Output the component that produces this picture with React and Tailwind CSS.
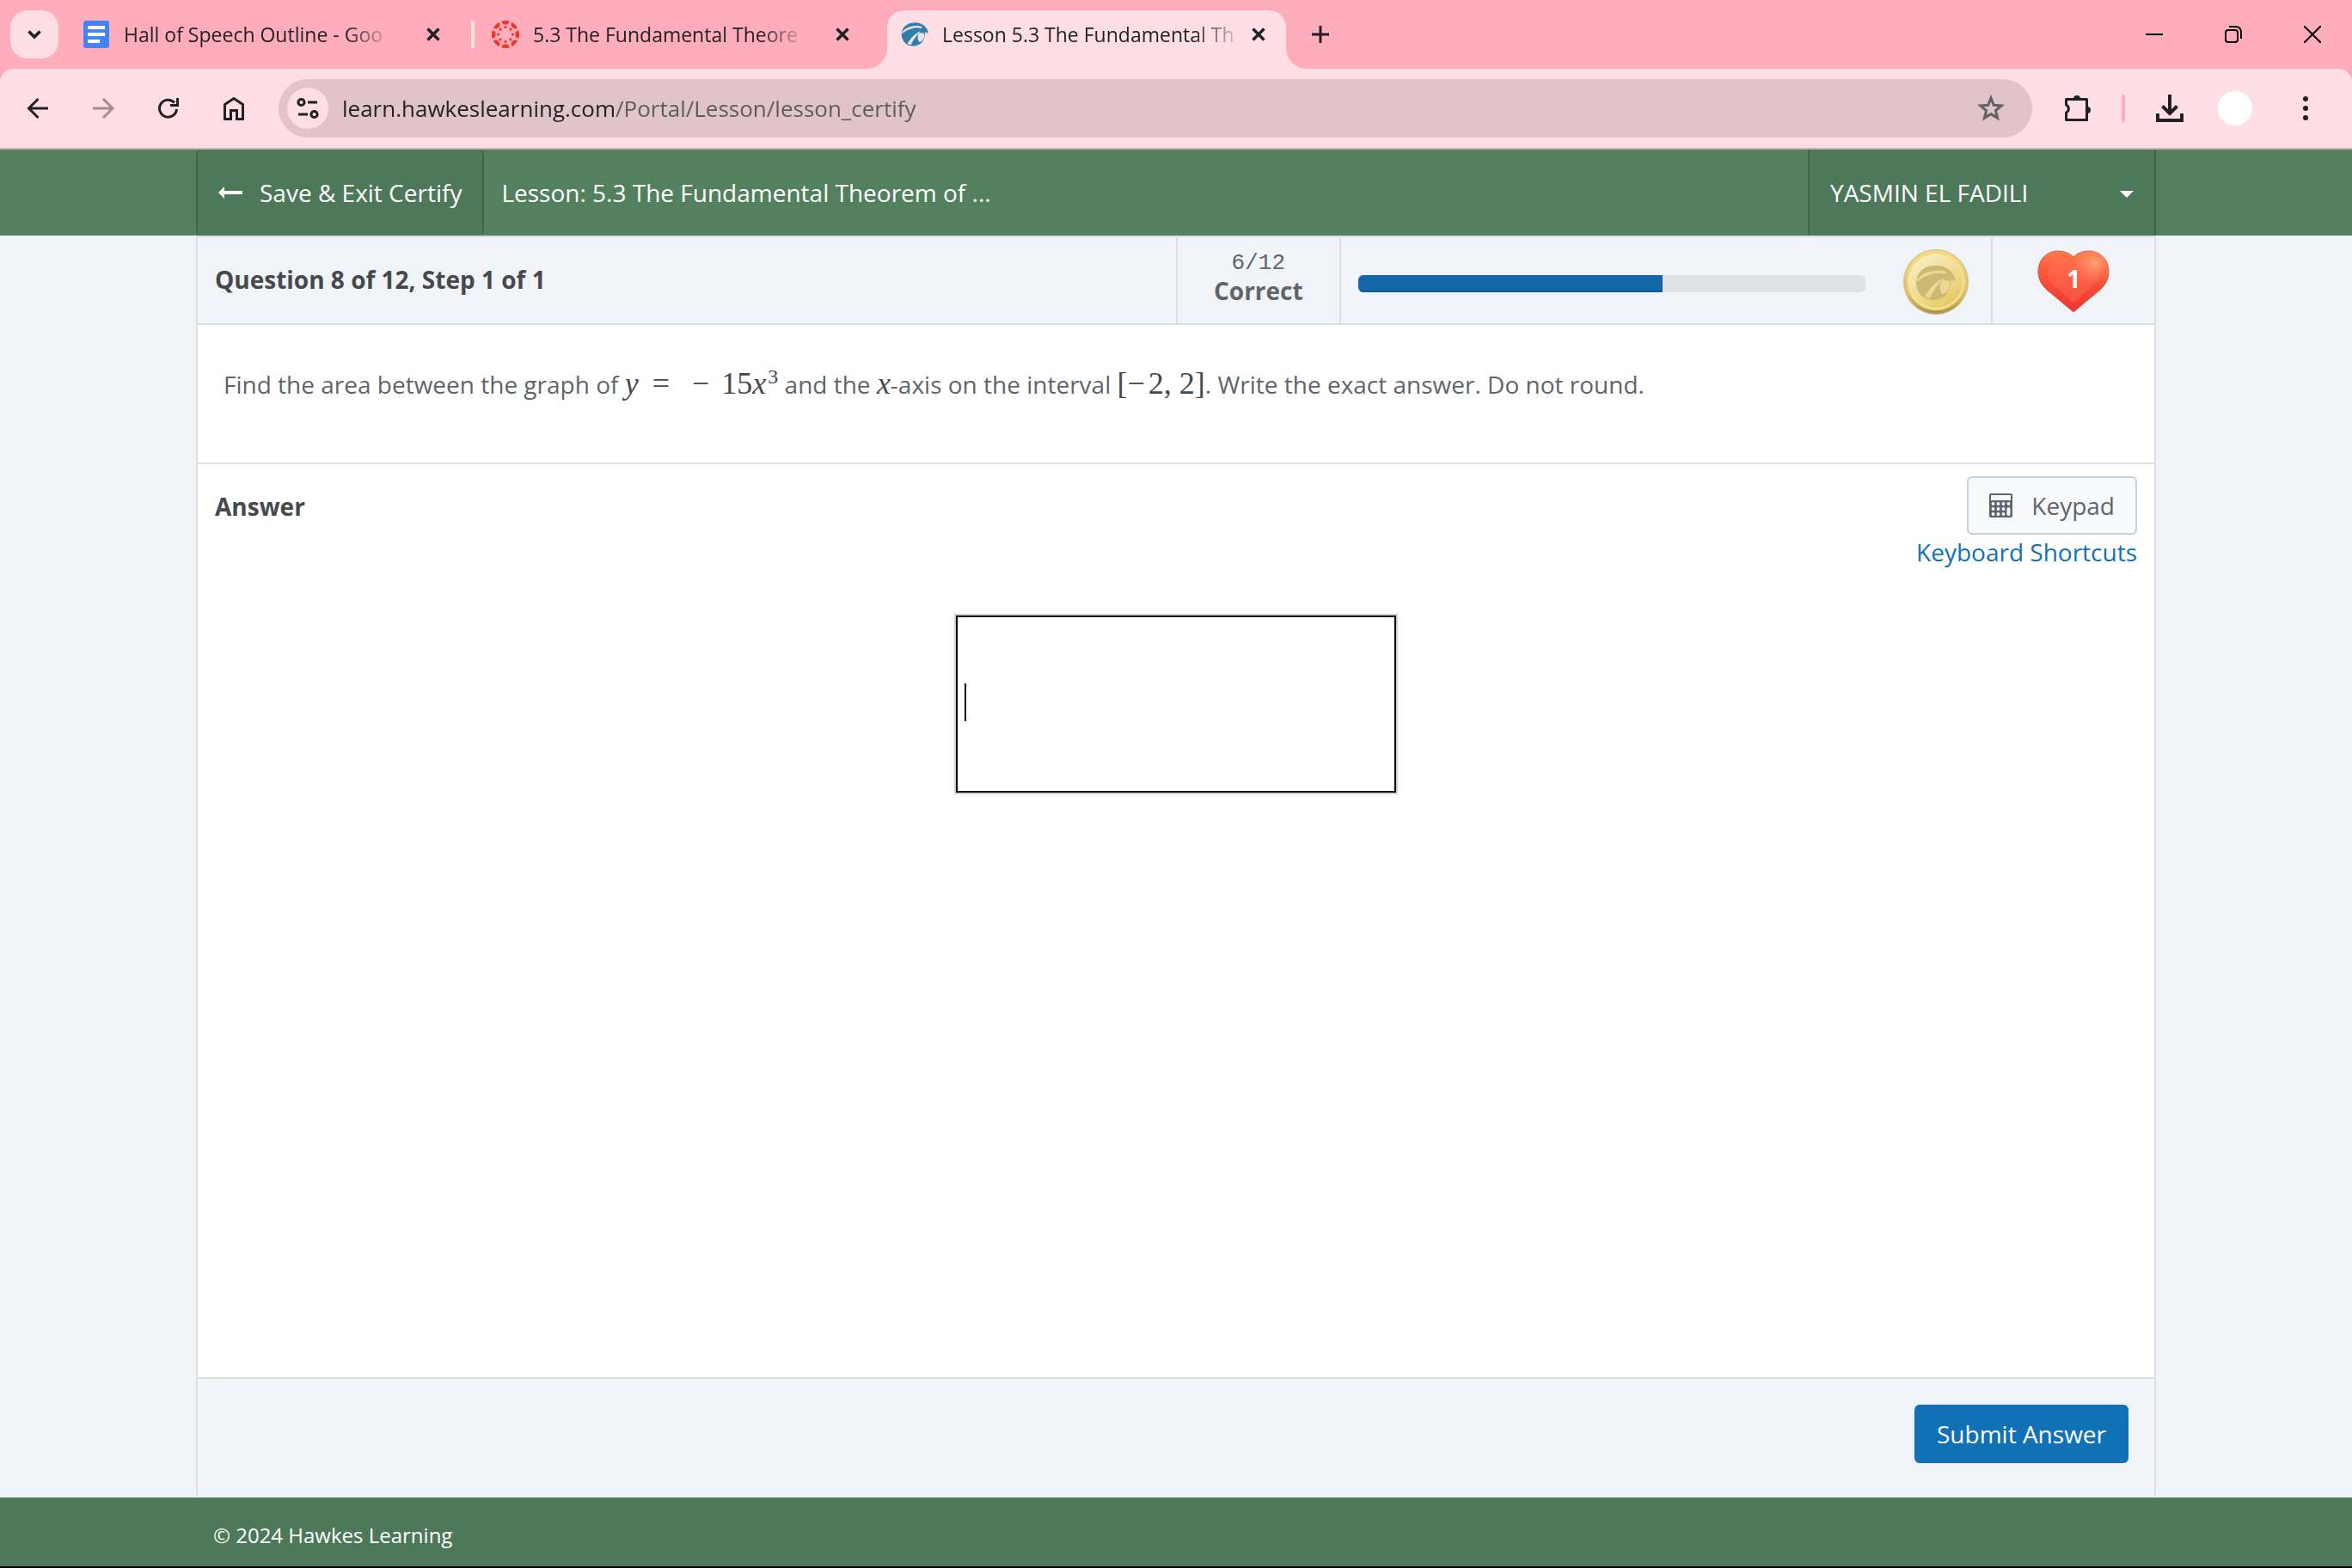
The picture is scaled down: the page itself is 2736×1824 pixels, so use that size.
import { useState } from 'react'

const TABS = [
  { id: 'docs', title: 'Hall of Speech Outline - Goo', icon: 'docs' },
  { id: 'canvas', title: '5.3 The Fundamental Theore', icon: 'canvas' },
  { id: 'lesson', title: 'Lesson 5.3 The Fundamental Th', icon: 'eagle' },
]

const Icon = ({ size = 32, className = '', children }) => (
  <svg
    width={size}
    height={size}
    viewBox={`0 0 ${size} ${size}`}
    fill="none"
    stroke="currentColor"
    strokeWidth="3"
    aria-hidden="true"
    className={`shrink-0 ${className}`}
  >
    {children}
  </svg>
)

const EagleShape = ({ body, light }) => (
  <>
    <path
      fill={body}
      stroke="none"
      d="M1 20C2 8 11 1 22 1C32 0 40 5 43 10C46 13 47 17 46 20C45 18 43 17 41 17C42 28 36 41 21 41C9 41 1 32 1 20Z"
    />
    <path
      fill={light}
      stroke="none"
      d="M2 17C10 8 22 5 33 7C36 8 37 10 35 11C27 8 14 10 2 20ZM11 37C16 28 24 19 34 15C28 21 21 30 17 39ZM31 18C36 19 40 17 40 22C40 30 35 34 31 34C28 30 28 24 31 18Z"
    />
  </>
)

const Favicon = ({ name }) => {
  if (name === 'docs') {
    return (
      <Icon>
        <rect x="1" width="30" height="32" rx="3" fill="#4285f4" stroke="none" />
        <path d="M6 8h20M6 16h20M6 24h14" stroke="#fff" strokeWidth="4" />
      </Icon>
    )
  }
  if (name === 'canvas') {
    const angles = [0, 45, 90, 135, 180, 225, 270, 315]
    return (
      <Icon>
        <clipPath id="rim">
          <circle cx="16" cy="16" r="16" />
        </clipPath>
        <g clipPath="url(#rim)" fill="#e63a2c" stroke="none">
          {angles.map(angle => (
            <g key={angle} transform={`rotate(${angle} 16 16)`}>
              <circle cx="16" cy="0" r="4.8" />
              <circle cx="16" cy="7.6" r="1.6" />
            </g>
          ))}
        </g>
      </Icon>
    )
  }
  return (
    <svg width="32" height="30" viewBox="0 0 47 42" aria-hidden="true" className="shrink-0">
      <EagleShape body="#2f7fa6" light="#e9e4ea" />
    </svg>
  )
}

const CloseIcon = () => (
  <Icon size={16}>
    <path d="M1.5 1.5l13 13M14.5 1.5l-13 13" strokeWidth="3.4" />
  </Icon>
)

const Tab = ({ tab, active }) => (
  <div
    className={`relative flex h-full items-center pl-4 ${
      active ? 'w-[464px] rounded-t-[20px] bg-[#ffdfe5] pr-6' : 'w-[448px] pr-4'
    }`}
  >
    {active && (
      <>
        <svg width="24" height="24" className="absolute bottom-0 -left-6" aria-hidden="true">
          <path d="M24 0V24H0A24 24 0 0 0 24 0Z" fill="#ffdfe5" />
        </svg>
        <svg width="24" height="24" className="absolute -right-6 bottom-0" aria-hidden="true">
          <path d="M0 0V24H24A24 24 0 0 1 0 0Z" fill="#ffdfe5" />
        </svg>
      </>
    )}
    <div className="flex h-14 min-w-0 flex-1 items-center self-start">
      <Favicon name={tab.icon} />
      <span className="mr-auto ml-4 text-[23px] whitespace-nowrap [mask-image:linear-gradient(to_right,#000_86%,#0003)]">
        {tab.title}
      </span>
      <button type="button" aria-label={`Close ${tab.title}`}>
        <CloseIcon />
      </button>
    </div>
  </div>
)

const TabStrip = () => (
  <div className="flex h-20 items-end bg-[#ffadbb] pl-3 text-[#1f2124]">
    <button
      type="button"
      aria-label="Search tabs"
      className="mb-3 flex size-14 items-center justify-center rounded-[20px] bg-[#ffdfe5]"
    >
      <Icon size={16}>
        <path d="M1.5 4.5L8 11l6.500-6.500" strokeWidth="3.600" />
      </Icon>
    </button>
    <div className="ml-3 flex h-[68px] flex-1 items-start">
      <Tab tab={TABS[0]} />
      <span className="mt-3 ml-5 h-8 w-1 rounded-full bg-[#ffdfe5]" />
      <div className="ml-1 h-full">
        <Tab tab={TABS[1]} />
      </div>
      <div className="ml-7 h-full">
        <Tab tab={TABS[2]} active />
      </div>
      <button type="button" aria-label="New tab" className="mt-[18px] ml-[30px]">
        <Icon size={20}>
          <path d="M10 0v20M0 10h20" />
        </Icon>
      </button>
    </div>
    <div className="flex h-full items-center gap-[72px] pr-9 text-black">
      <button type="button" aria-label="Minimize">
        <Icon size={20}>
          <path d="M0 10h20" strokeWidth="2" />
        </Icon>
      </button>
      <button type="button" aria-label="Restore">
        <Icon size={20}>
          <rect x="1" y="5" width="14" height="14" rx="3" strokeWidth="2" />
          <path d="M5 1h8a6 6 0 0 1 6 6v8" strokeWidth="2" />
        </Icon>
      </button>
      <button type="button" aria-label="Close window">
        <Icon size={20}>
          <path d="M0 0l20 20M20 0L0 20" strokeWidth="2" />
        </Icon>
      </button>
    </div>
  </div>
)

const Toolbar = () => {
  const [url, setUrl] = useState('learn.hawkeslearning.com/Portal/Lesson/lesson_certify')

  return (
    <div className="bg-[#ffadbb]">
      <div className="flex h-[94px] items-center rounded-t-2xl border-b-2 border-[#c8b2b8] bg-[#ffdfe5] pr-[38px] pl-7 text-[#1f2124]">
        <div className="flex gap-11">
          <button type="button" aria-label="Back">
            <Icon>
              <path d="M28 16H6M16.500 5L5.500 16l11 11" />
            </Icon>
          </button>
          <button type="button" aria-label="Forward" className="text-[#a18c93]">
            <Icon>
              <path d="M4 16h22M16 5l11 11-11 11" />
            </Icon>
          </button>
          <button type="button" aria-label="Reload">
            <Icon>
              <path d="M25.500 17A10 10 0 1 1 23 9.500M26.500 4v8.500H18" />
            </Icon>
          </button>
          <button type="button" aria-label="Home">
            <Icon>
              <path d="M5.500 28.500V11.500L16 4.500l10.500 7v17h-7V18.500h-7v10z" />
            </Icon>
          </button>
        </div>
        <div className="ml-9 flex h-[68px] flex-1 items-center rounded-full bg-[#e0c4ca] pr-8 pl-[10px]">
          <button
            type="button"
            aria-label="View site information"
            className="flex size-12 items-center justify-center rounded-full bg-[#ffdfe5]"
          >
            <Icon size={28}>
              <circle cx="6.500" cy="7" r="3.600" />
              <path d="M14 7h11M3 21h11" />
              <circle cx="21.500" cy="21" r="3.600" />
            </Icon>
          </button>
          <input
            aria-label="Address"
            value={url}
            onChange={e => setUrl(e.target.value)}
            className="ml-4 flex-1 bg-[linear-gradient(to_right,#1f2124_318px,#5b5a5e_318px)] bg-clip-text text-[26px] text-transparent caret-black outline-none"
          />
          <button type="button" aria-label="Bookmark this tab" className="text-[#606266]">
            <Icon>
              <path d="M16 4l3.300 8.300 9 .6-6.900 5.700 2.200 8.700L16 22.600l-7.600 4.700 2.200-8.700-6.900-5.700 9-.6z" />
            </Icon>
          </button>
        </div>
        <div className="ml-9 flex items-center gap-9">
          <button type="button" aria-label="Extensions">
            <Icon>
              <path d="M3.500 5.500h24v24h-24V21a5 5 0 0 0 0-9z" strokeLinejoin="round" />
              <path
                d="M12 5a4 4 0 0 1 8 0zM28 14a4 4 0 0 1 0 8z"
                fill="currentColor"
                stroke="none"
              />
            </Icon>
          </button>
          <span className="h-8 w-1 rounded-full bg-[#ffadbb]" />
          <button type="button" aria-label="Downloads">
            <Icon>
              <path d="M16 0v21M7.500 13.500L16 22l8.500-8.500M2 22v8h28v-8" strokeWidth="4" />
            </Icon>
          </button>
        </div>
        <button type="button" aria-label="Profile" className="ml-10 size-10 rounded-full bg-white" />
        <button type="button" aria-label="Chrome menu" className="ml-[46px]">
          <Icon>
            <g fill="currentColor" stroke="none">
              <circle cx="16" cy="5" r="3" />
              <circle cx="16" cy="16" r="3" />
              <circle cx="16" cy="27" r="3" />
            </g>
          </Icon>
        </button>
      </div>
    </div>
  )
}

const LessonHeader = () => (
  <header className="bg-[#53815f] text-white">
    <div className="mx-auto flex h-[100px] max-w-[2280px] items-stretch">
      <button
        type="button"
        className="flex items-center gap-5 rounded-md border-x-2 border-[#3f6549] bg-[#4d785a] px-6"
      >
        <svg width="28" height="14" viewBox="0 0 28 14" aria-hidden="true">
          <path d="M0 7L7 0V5H28V9H7V14Z" fill="currentColor" />
        </svg>
        Save &amp; Exit Certify
      </button>
      <h1 className="flex flex-1 items-center pl-5">Lesson: 5.3 The Fundamental Theorem of ...</h1>
      <button
        type="button"
        aria-haspopup="menu"
        className="flex w-[405px] items-center justify-between border-x-2 border-[#3f6549] bg-[#4d785a] px-6"
      >
        YASMIN EL FADILI
        <svg width="16" height="8" viewBox="0 0 16 8" aria-hidden="true" className="mt-1">
          <path d="M0 0H16L8 8Z" fill="currentColor" />
        </svg>
      </button>
    </div>
  </header>
)

const Coin = () => (
  <svg width="76" height="76" viewBox="0 0 76 76" aria-hidden="true" className="mt-1 shrink-0">
    <defs>
      <linearGradient id="coinEdge" x1="0" y1="0" x2="0" y2="1">
        <stop offset="0" stopColor="#f3d98a" />
        <stop offset="0.700" stopColor="#dcc06a" />
        <stop offset="1" stopColor="#a8924a" />
      </linearGradient>
      <linearGradient id="coinFace" x1="0.150" y1="0" x2="0.850" y2="1">
        <stop offset="0" stopColor="#fbeec4" />
        <stop offset="0.500" stopColor="#f1dc94" />
        <stop offset="1" stopColor="#e6c65c" />
      </linearGradient>
    </defs>
    <circle cx="38" cy="38" r="37.500" fill="url(#coinEdge)" stroke="#cdbb84" strokeWidth="1" />
    <circle cx="38" cy="37" r="34" fill="#f3d97f" />
    <circle cx="38" cy="37" r="31.500" fill="url(#coinFace)" stroke="#f8e7a8" strokeWidth="1" />
    <g transform="translate(14 18)">
      <EagleShape body="#cdb974" light="#ecd893" />
    </g>
  </svg>
)

const Heart = () => (
  <svg width="84" height="74" viewBox="0 0 84 74" aria-hidden="true">
    <defs>
      <linearGradient id="heartFill" x1="0" y1="0" x2="0" y2="1">
        <stop offset="0" stopColor="#ff7a4a" />
        <stop offset="0.300" stopColor="#fd5a3c" />
        <stop offset="1" stopColor="#ee3430" />
      </linearGradient>
      <radialGradient id="heartGlow" cx="0.800" cy="0.200" r="0.350">
        <stop offset="0" stopColor="#ffa377" />
        <stop offset="1" stopColor="#ff7a55" stopOpacity="0" />
      </radialGradient>
    </defs>
    <path
      d="M42 72L12 47C4 40 1 33 1 25C1 10 12 1 24 1C32 1 38 4 42 8C46 4 52 1 60 1C72 1 83 10 83 25C83 33 80 40 72 47Z"
      fill="url(#heartFill)"
      stroke="#c9624f"
      strokeWidth="1"
    />
    <path
      d="M42 61L20 42C14 37 12 32 12 26C12 16 18 10 26 10C33 10 38 13 42 18C46 13 51 10 58 10C66 10 72 16 72 26C72 32 70 37 64 42Z"
      fill="#ff7a60"
      opacity="0.350"
    />
    <path
      d="M42 72L12 47C4 40 1 33 1 25C1 10 12 1 24 1C32 1 38 4 42 8C46 4 52 1 60 1C72 1 83 10 83 25C83 33 80 40 72 47Z"
      fill="url(#heartGlow)"
    />
  </svg>
)

const StatusBar = ({ correct = 6, total = 12, progress = 60, lives = 1 }) => (
  <div className="grid h-[104px] grid-cols-12 border-y-2 border-[#dfdfdf] bg-[#f0f4f8]">
    <h2 className="col-span-6 flex items-center pb-[2px] pl-5 font-bold text-[#45494e]">
      Question 8 of 12, Step 1 of 1
    </h2>
    <div className="flex flex-col items-center border-l-2 border-[#dfdfdf] pt-[14px] leading-8 text-[#5f656b]">
      <span className="font-['Liberation_Mono',monospace] text-[26px]">
        {correct}/{total}
      </span>
      <strong>Correct</strong>
    </div>
    <div className="col-span-4 flex items-center gap-11 border-l-2 border-[#dfdfdf] pr-[26px] pl-5">
      <div
        role="progressbar"
        aria-label="Progress"
        aria-valuenow={progress}
        className="mt-2 h-5 flex-1 overflow-hidden rounded-md bg-[#e1e2e6]"
      >
        <div
          className="h-full border-b-2 border-[#125b92] bg-[#1467a7]"
          style={{ width: `${progress}%` }}
        />
      </div>
      <Coin />
    </div>
    <div className="grid place-items-center border-l-2 border-[#dfdfdf]">
      <span className="col-start-1 row-start-1 pt-1">
        <Heart />
      </span>
      <strong className="z-10 col-start-1 row-start-1 pb-1 text-white">{lives}</strong>
    </div>
  </div>
)

const Question = () => (
  <section className="border-b-2 border-[#dfdfdf] pt-10 pb-[63px] pl-[30px] leading-[56px] text-[#5f656b]">
    <p>
      Find the area between the graph of{' '}
      <span className="font-['Liberation_Serif',serif] text-[36px] text-[#45494e]">
        <i>y</i>
        <span className="mr-3 ml-4">=</span>
        <span className="mx-[14px]">−</span>15<i>x</i>
        <sup className="ml-[2px] text-[24px]">3</sup>
      </span>{' '}
      and the <i className="font-['Liberation_Serif',serif] text-[36px] text-[#45494e]">x</i>-axis on
      the interval{' '}
      <span className="font-['Liberation_Serif',serif] text-[36px] text-[#45494e]">
        [<span className="mr-1">−</span>2, 2]
      </span>
      . Write the exact answer. Do not round.
    </p>
  </section>
)

const Answer = () => {
  const [answer, setAnswer] = useState('')

  return (
    <section className="flex flex-1 flex-col px-5 pt-[14px]">
      <div className="flex items-start justify-between">
        <label htmlFor="answer" className="leading-[70px] font-bold text-[#45494e]">
          Answer
        </label>
        <div className="flex flex-col items-end">
          <button
            type="button"
            className="flex h-[68px] items-center gap-[22px] rounded-md border-2 border-[#c5d2da] bg-[#f7f9fb] px-6 text-[#5f656b]"
          >
            <svg width="27" height="28" viewBox="0 0 27 28" aria-hidden="true">
              <rect width="27" height="28" rx="2" fill="currentColor" />
              <rect x="2" y="2" width="23" height="6" fill="#f7f9fb" />
              <g fill="#f7f9fb">
                {[12, 18, 24].map(cy =>
                  [4.500, 10.500, 16.500].map(cx => <circle key={`${cx}-${cy}`} cx={cx} cy={cy} r="1.900" />)
                )}
                <circle cx="22.500" cy="12" r="1.900" />
                <rect x="20.500" y="16" width="4" height="10" rx="2" />
              </g>
            </svg>
            Keypad
          </button>
          <a href="#shortcuts" className="leading-10 text-[#1171b7]">
            Keyboard Shortcuts
          </a>
        </div>
      </div>
      <div className="mt-[52px] flex h-[210px] w-[516px] items-center self-center border-2 border-[#d0d0d0] pl-[10px] shadow-[inset_0_0_0_2px_#000]">
        <span className="mb-1 h-11 w-[2px] bg-black" />
        <input
          id="answer"
          value={answer}
          onChange={e => setAnswer(e.target.value)}
          className="h-full min-w-0 flex-1 outline-none"
        />
      </div>
    </section>
  )
}

const App = () => (
  <div className="flex min-h-screen flex-col bg-[#f0f4f8] font-['Open_Sans',sans-serif] text-[28px]">
    <TabStrip />
    <Toolbar />
    <LessonHeader />
    <main className="mx-auto flex w-full max-w-[2280px] flex-1 flex-col border-x-2 border-[#dfdfdf] bg-white">
      <StatusBar />
      <Question />
      <Answer />
      <div className="flex h-[140px] items-start justify-end border-t-2 border-[#dfdfdf] bg-[#f0f4f8] px-[30px] pt-[30px]">
        <button type="submit" className="h-[68px] rounded-md bg-[#1171b7] px-[26px] text-white">
          Submit Answer
        </button>
      </div>
    </main>
    <footer className="border-b-2 border-black bg-[#4d785a] text-white">
      <div className="mx-auto flex h-20 max-w-[2280px] items-center px-5 pt-2 text-[24px]">
        © 2024 Hawkes Learning
      </div>
    </footer>
  </div>
)

export default App
